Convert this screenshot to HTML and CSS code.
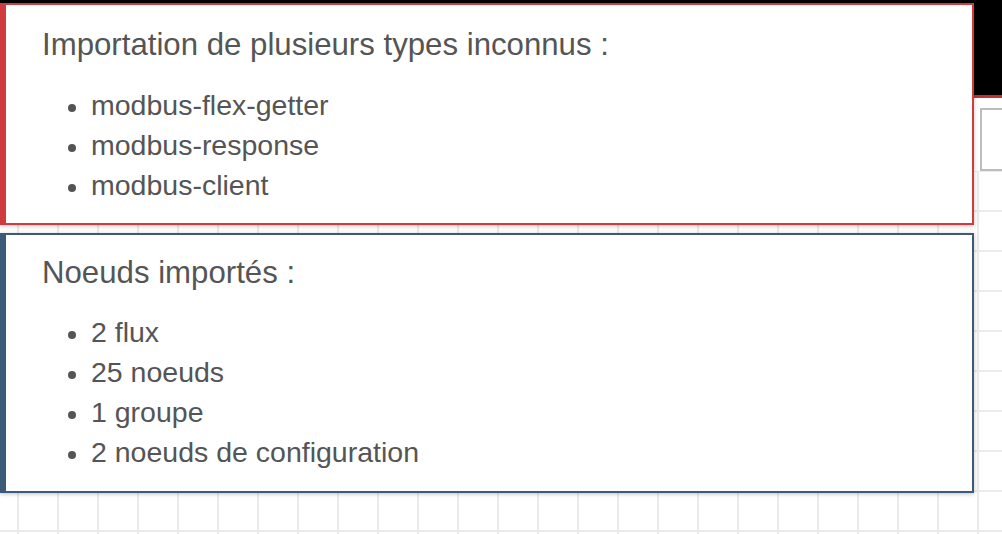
FILE: index.html
```html
<!DOCTYPE html>
<html lang="fr">
<head>
<meta charset="utf-8">
<title>Import</title>
<link rel="stylesheet" href="styles.css">
</head>
<body>
<div class="app">
  <header class="header"></header>
  <div class="tabbar"><div class="tab"></div></div>
  <main class="canvas"></main>
</div>
<div class="notifications">
  <section class="note note-error">
    <p class="note-title">Importation de plusieurs types inconnus :</p>
    <ul class="note-list">
      <li>modbus-flex-getter</li>
      <li>modbus-response</li>
      <li>modbus-client</li>
    </ul>
  </section>
  <section class="note note-info">
    <p class="note-title">Noeuds importés :</p>
    <ul class="note-list">
      <li>2 flux</li>
      <li>25 noeuds</li>
      <li>1 groupe</li>
      <li>2 noeuds de configuration</li>
    </ul>
  </section>
</div>
</body>
</html>
```
FILE: styles.css
```css
html, body {
  margin: 0;
  padding: 0;
  height: 100%;
  background: #fff;
  font-family: "Liberation Sans", Arial, Helvetica, sans-serif;
  overflow: hidden;
}
.app {
  display: flex;
  flex-direction: column;
  height: 100%;
}
.header {
  height: 95px;
  flex: none;
  background: #000;
  border-bottom: 3px solid #b93434;
}
.tabbar {
  flex: none;
  height: 73px;
  box-sizing: border-box;
  padding: 10px 0 0 980px;
  display: flex;
  background: #fff;
}
.tab {
  width: 120px;
  border: 2px solid #bdbdbd;
  border-right: none;
}
.canvas {
  flex: 1;
  background-color: #fff;
  background-image:
    linear-gradient(to right, #ebebeb 2px, transparent 2px),
    linear-gradient(to bottom, #ebebeb 2px, transparent 2px);
  background-size: 40px 40px;
  background-position: 17px 39px;
}
.notifications {
  position: absolute;
  top: 3px;
  left: 0;
  width: 974px;
  display: flex;
  flex-direction: column;
  gap: 8px;
}
.note {
  background: #fff;
  border: 2px solid;
  border-left-width: 6px;
  padding: 0 0 0 36px;
  box-shadow: 0 1px 4px rgba(0, 0, 0, 0.25);
  color: #555;
}
.note-error {
  border-color: #d03b40;
  padding-top: 20px;
  padding-bottom: 18px;
}
.note-info {
  border-color: #3d5a78;
  padding-top: 18px;
  padding-bottom: 19px;
}
.note-title {
  margin: 0;
  font-size: 31.2px;
  line-height: 40px;
}
.note-list {
  margin: 0;
  padding-left: 49px;
  list-style: none;
  font-size: 28.5px;
  line-height: 40px;
}
.note-list li {
  position: relative;
}
.note-list li::before {
  content: "";
  position: absolute;
  left: -23px;
  top: 19px;
  width: 8px;
  height: 8px;
  border-radius: 50%;
  background: #555;
}
.note-error .note-list { margin-top: 20px; }
.note-info .note-list { margin-top: 19px; }
```
